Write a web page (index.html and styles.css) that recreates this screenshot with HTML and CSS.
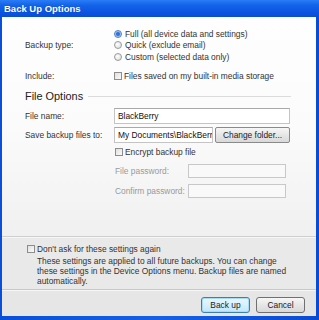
FILE: index.html
```html
<!DOCTYPE html>
<html>
<head>
<meta charset="utf-8">
<link rel="stylesheet" href="styles.css">
</head>
<body>
<div class="window">
  <div class="titlebar">Back Up Options</div>
  <div class="client">
    <div class="main">
      <div class="row row-backup">
        <div class="label">Backup type:</div>
        <div class="options">
          <div class="opt"><span class="radio checked"></span>Full (all device data and settings)</div>
          <div class="opt"><span class="radio"></span>Quick (exclude email)</div>
          <div class="opt"><span class="radio"></span>Custom (selected data only)</div>
        </div>
      </div>
      <div class="row row-include">
        <div class="label">Include:</div>
        <div class="opt"><span class="check"></span>Files saved on my built-in media storage</div>
      </div>
      <div class="heading"><span>File Options</span><span class="hline"></span></div>
      <div class="row row-field">
        <div class="label">File name:</div>
        <div class="input wide">BlackBerry</div>
      </div>
      <div class="row row-field row-save">
        <div class="label">Save backup files to:</div>
        <div class="input narrow">My Documents\BlackBerry</div>
        <div class="btn change">Change folder...</div>
      </div>
      <div class="row row-encrypt">
        <div class="label"></div>
        <div class="opt"><span class="check"></span>Encrypt backup file</div>
      </div>
      <div class="row row-pw first">
        <div class="label"></div>
        <div class="pwlabel">File password:</div>
        <div class="input pw"></div>
      </div>
      <div class="row row-pw">
        <div class="label"></div>
        <div class="pwlabel">Confirm password:</div>
        <div class="input pw"></div>
      </div>
    </div>
    <div class="lower">
      <div class="opt dontask"><span class="check"></span>Don't ask for these settings again</div>
      <p class="note">These settings are applied to all future backups. You can change these settings in the Device Options menu. Backup files are named automatically.</p>
    </div>
    <div class="buttons">
      <div class="btn default">Back up</div>
      <div class="btn">Cancel</div>
    </div>
  </div>
</div>
</body>
</html>
```
FILE: styles.css
```css
* { box-sizing: border-box; }
html, body { margin: 0; padding: 0; }
body {
  font-family: "Liberation Sans", Arial, sans-serif;
  font-size: 8.4px;
  color: #333;
  width: 319px;
  height: 320px;
  overflow: hidden;
}
.window {
  width: 319px;
  height: 320px;
  display: flex;
  flex-direction: column;
  background: linear-gradient(to right, #0a4fd9, #1660e6 50%, #0a4bd2);
  padding: 0 3px 4px 2px;
}
.titlebar {
  height: 17px;
  line-height: 18px;
  margin: 0 -3px 0 -2px;
  padding-left: 4px;
  font-weight: bold;
  font-size: 9.5px;
  color: #fff;
  background: linear-gradient(to bottom, #2a7df5 0%, #1463ea 30%, #0c55e0 70%, #0a4cd6 100%);
  text-shadow: 0 0 1px #0a3aa0;
}
.client {
  flex: 1;
  display: flex;
  flex-direction: column;
  background: #e9e9e9;
}
.main {
  height: 220px;
  padding: 11px 0 0 23px;
  background: linear-gradient(to bottom, #fefefe 0%, #fbfbfb 50%, #f0f0f0 100%);
  border-bottom: 1px solid #cfcfcf;
}
.row { display: flex; align-items: center; }
.label { width: 89px; flex: none; }
.options { display: flex; flex-direction: column; }
.opt {
  display: flex;
  align-items: center;
  height: 11.5px;
  white-space: nowrap;
}
.radio {
  width: 8px; height: 8px;
  border-radius: 50%;
  border: 1px solid #9a9a9a;
  background: radial-gradient(circle at 40% 40%, #fff, #d8d8d8);
  margin-right: 3px;
  flex: none;
}
.radio.checked {
  border-color: #4d7fbf;
  background: radial-gradient(circle at 50% 50%, #2c6bd0 0, #3a7ae0 1.6px, #a9c8ef 2.6px, #e8f0fa 100%);
}
.check {
  width: 8px; height: 8px;
  border: 1px solid #8d8d8d;
  background: linear-gradient(to bottom right, #e0e0e0, #fafafa);
  margin-right: 2px;
  flex: none;
}
.row-include { margin-top: 8px; height: 11px; align-items: flex-start; }
.heading {
  display: flex;
  align-items: center;
  margin-top: 7px;
  height: 14px;
  font-size: 10.9px;
  color: #222;
}
.hline {
  flex: none;
  width: 203px;
  margin-left: 5px;
  margin-top: 2px;
  height: 1px;
  background: #dcdcdc;
}
.row-field { margin-top: 5px; height: 16px; }
.row-save { margin-top: 3px; }
.input {
  height: 16px;
  border: 1px solid #c4c4c4;
  border-top-color: #a9a9a9;
  background: #fff;
  padding: 0 3px;
  line-height: 14px;
  white-space: nowrap;
  overflow: hidden;
  color: #111;
}
.input.wide { width: 176px; }
.input.narrow { width: 99px; }
.btn {
  height: 16px;
  border: 1px solid #8a8a8a;
  border-radius: 2px;
  background: linear-gradient(to bottom, #f7f7f7, #e6e6e6 50%, #d9d9d9);
  text-align: center;
  line-height: 14px;
  color: #222;
  white-space: nowrap;
}
.btn.change { width: 75px; margin-left: 2px; }
.row-encrypt { margin-top: 4px; height: 11px; }
.row-encrypt .opt { margin-left: 1px; }
.row-pw { height: 14px; margin-top: 6px; }
.pwlabel { width: 73px; color: #9a9a9a; margin-left: 1px; }
.input.pw { width: 98px; height: 14px; border-color: #c8c8c8; background: #f9f9f9; }
.lower {
  padding: 5px 10px 0 25px;
  height: 53px;
  border-top: 1px solid #f6f6f6;
  border-bottom: 1px solid #c8c8c8;
  background: #e9e9e9;
}
.dontask { height: 11px; }
.note {
  width: 252px;
  margin: 3px 0 0 10px;
  line-height: 9.8px;
  color: #333;
}
.buttons {
  flex: 1;
  display: flex;
  justify-content: flex-end;
  align-items: flex-start;
  gap: 6px;
  padding: 6px 11px 0 0;
  border-top: 1px solid #f6f6f6;
  background: #e6e6e6;
}
.buttons .btn {
  width: 49px;
  height: 16px;
  border-radius: 3px;
  border-color: #707070;
}
.buttons .btn.default {
  border-color: #3c7fb1;
  background: linear-gradient(to bottom, #eaf6fd, #d9f0fc 50%, #bee6fd);
  box-shadow: inset 0 0 0 1px #a6dcf8;
}
```
